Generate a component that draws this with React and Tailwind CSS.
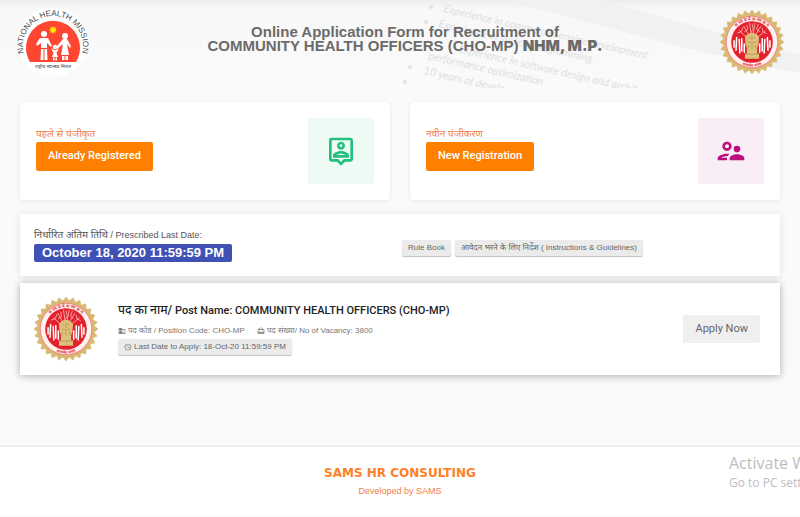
import { useId } from "react";
import { MdAccessTime, MdBusiness, MdCardTravel, MdOutlinePersonPin, MdOutlineSupervisorAccount } from "react-icons/md";

const TEETH = 28;
const rim = Array.from({ length: TEETH * 2 }, (_, i) => {
    const angle = (i / (TEETH * 2)) * Math.PI * 2;
    const r = i % 2 ? 44 : 50;
    return `${(50 + Math.cos(angle) * r).toFixed(1)},${(50 + Math.sin(angle) * r).toFixed(1)}`;
}).join(" ");

const branches = [
    "M50 50 L30 32", "M50 48 L37 25", "M50 46 L46 20", "M50 46 L55 20", "M50 48 L64 25", "M50 50 L71 32",
    "M36 27 l-3 7 l-6 2", "M42 23 l1 8 l-5 3", "M60 22 l-3 8 l5 4", "M66 28 l1 6 l6 3", "M50 21 l2 9 l-4 5",
];

function StateEmblem({ className }) {
    const id = useId();
    return (
        <svg viewBox="0 0 100 100" className={className} role="img" aria-label="मध्यप्रदेश शासन">
            <defs>
                <path id={`${id}-top`} d="M 16 50 A 34 34 0 0 1 84 50" />
                <path id={`${id}-low`} d="M 11.500 50 A 38.500 38.500 0 0 0 88.500 50" />
            </defs>
            <polygon points={rim} fill="#d9b871" stroke="#d9b871" strokeWidth="1" strokeLinejoin="round" />
            <circle cx="50" cy="50" r="41" fill="#f08a8a" />
            <circle cx="50" cy="50" r="39.500" fill="#fff1ee" />
            <circle cx="50" cy="50" r="32.500" fill="#e3202b" />
            <text fontSize="7" fontWeight="700" fill="#e3303a" className="font-['Noto_Sans',sans-serif]">
                <textPath href={`#${id}-top`} startOffset="50%" textAnchor="middle">म ध्य प्र दे श   शा स न</textPath>
            </text>
            <text fontSize="6" fontWeight="700" fill="#e3303a" className="font-['Noto_Sans',sans-serif]">
                <textPath href={`#${id}-low`} startOffset="50%" textAnchor="middle">सत्यमेव जयते</textPath>
            </text>
            <g fill="none" stroke="#ffc9c6" strokeWidth="1.200">
                {branches.map((d) => (
                    <path key={d} d={d} />
                ))}
            </g>
            <g fill="none" stroke="#fff" strokeWidth="2.400" strokeLinecap="round">
                <path d="M22 48 V58 M26 43 L25 63 M30 46 L31 67 M34 45 L34 64 M38 53 V66" />
                <path d="M78 48 V58 M74 43 L75 63 M70 46 L69 67 M66 45 L66 64 M62 53 V66" />
            </g>
            <g fill="#dcc07c">
                <path d="M43 38 q7 -5 14 0 l4 4 -1 12 -3 8 H43 l-3 -8 -1 -12z" />
                <path d="M42 60 H58 V68 H61 V76 H39 V68 H42z" />
            </g>
            <g fill="none" stroke="#a98843" strokeWidth="1">
                <path d="M45 43 h3 M52 43 h3 M50 40 v8 M43 49 q7 5 14 0 M44 54 v6 M50 54 v6 M56 54 v6 M40 69 h20" />
            </g>
        </svg>
    );
}

function MissionLogo({ className }) {
    const id = useId();
    return (
        <svg viewBox="0 0 74 74" className={className} role="img" aria-label="National Health Mission">
            <defs>
                <path id={id} d="M 9.800 50.500 A 30 30 0 1 1 64.200 50.500" />
            </defs>
            <circle cx="37" cy="34" r="35" fill="#fff" />
            <path d="M14 54 A27 27 0 1 1 60 54z" fill="#ff4632" />
            <text fontSize="8" fill="#4b4b4b" className="font-['Liberation_Sans',sans-serif]">
                <textPath href={`#${id}`} startOffset="50%" textAnchor="middle">NATIONAL HEALTH MISSION</textPath>
            </text>
            <circle cx="37" cy="22" r="2.800" fill="#ffe600" />
            <path d="M37 18.500 v7 M33.500 22 h7 M34.500 19.500 l5 5 M39.500 19.500 l-5 5" stroke="#ffe600" strokeWidth="1" />
            <g fill="#fff">
                <circle cx="28" cy="26" r="3" />
                <path d="M24 30 H32 L36 38 L35 39 L31 35 V40 H25 V35 L21 38 L20 36z" />
                <path d="M25 41 H27.500 V52 H24.500z M28.500 41 H31 L31.500 52 H28.500z" />
                <circle cx="49" cy="28" r="3" />
                <path d="M47 31 H51 L55 38 L54 40 L51 36 L53 47 H45 L47 36 L41 41 L40 39z" />
                <path d="M46 48 H48.500 V52 H46z M49.500 48 H52 V52 H49.500z" />
                <circle cx="39" cy="39" r="2.200" />
                <path d="M35 40 L38 42 H40 L43 40 L40.500 45 L42 49 H36 L37.500 45z M37 49.500 h1.500 v3 h-1.500z M39.500 49.500 h1.500 v3 h-1.500z" />
            </g>
            <text x="37" y="60" fontSize="5" textAnchor="middle" fill="#444" className="font-['Noto_Sans',sans-serif]">
                राष्ट्रीय स्वास्थ्य मिशन
            </text>
        </svg>
    );
}

function HeaderBackdrop() {
    return (
        <div aria-hidden="true" className="absolute inset-0 overflow-hidden bg-linear-to-b from-[#ededee] via-[#f8f8f8] via-10% to-[#fafafa]">
            <svg viewBox="0 0 800 88" className="h-full w-full" preserveAspectRatio="xMidYMid slice">
                <path d="M505 0 H600 L680 22 L800 55 V73 L680 47z" fill="#f1f1f3" />
                <g fontSize="11" fontStyle="italic" fill="#dfdfe1" className="font-['Lato',sans-serif]">
                    <text transform="translate(443 12) rotate(13)">Experience in commercial engine development</text>
                    <text transform="translate(438 27) rotate(13)">Experience in system programming</text>
                    <text transform="translate(458 52) rotate(13)">Experience in software design and architecture</text>
                    <text transform="translate(428 59) rotate(13)">performance optimization</text>
                    <text transform="translate(423 74) rotate(13)">10 years of development</text>
                </g>
                <g fill="#e2e2e3">
                    <circle cx="431" cy="7" r="2" />
                    <circle cx="426" cy="22" r="2" />
                    <circle cx="410" cy="67" r="2" />
                    <circle cx="405" cy="82" r="2" />
                </g>
            </svg>
        </div>
    );
}

function RegisterCard({ label, action, icon, tint }) {
    return (
        <section className="flex flex-1 items-center justify-between rounded-sm bg-white p-4 shadow-[0_1px_4px_rgba(0,0,0,0.08)]">
            <div className="pb-1.5">
                <p className="text-[10px] leading-4 text-[#f08048]">{label}</p>
                <button type="button" className="h-[29px] rounded-xs bg-[#ff8000] px-3 text-[11px] font-medium text-white font-['Roboto','Noto_Sans',sans-serif]">
                    {action}
                </button>
            </div>
            <div className={`flex size-[66px] items-center justify-center rounded-xs ${tint}`}>{icon}</div>
        </section>
    );
}

const chip = "rounded-xs bg-[#ebebeb] px-1.5 text-[8px] leading-4 text-[#666] shadow-[0_1px_1px_rgba(0,0,0,0.25)]";

export default function App() {
    return (
        <div className="relative flex min-h-screen flex-col overflow-hidden bg-[#fafafa] font-['Liberation_Sans','Noto_Sans',sans-serif]">
            <header className="relative h-22">
                <HeaderBackdrop />
                <div className="relative flex items-center justify-between px-4 pt-2">
                    <MissionLogo className="size-[74px]" />
                    <h1 className="pb-3 text-center text-[15px] leading-[14px] font-bold text-[#6b6b6b]">
                        Online Application Form for Recruitment of
                        <br />
                        COMMUNITY HEALTH OFFICERS (CHO-MP) <span className="font-black font-['Inter',sans-serif]">NHM, M.P.</span>
                    </h1>
                    <StateEmblem className="mb-1.5 size-16" />
                </div>
            </header>

            <main className="grow px-5 pt-3.5">
                <div className="flex gap-5">
                    <RegisterCard
                        label="पहले से पंजीकृत"
                        action="Already Registered"
                        tint="bg-[#eefaf4]"
                        icon={<MdOutlinePersonPin className="size-8 text-[#23bf7c]" />}
                    />
                    <RegisterCard
                        label="नवीन पंजीकरण"
                        action="New Registration"
                        tint="bg-[#f9edf6]"
                        icon={<MdOutlineSupervisorAccount className="size-8 text-[#b9127f]" />}
                    />
                </div>

                <section className="mt-3.5 flex items-center rounded-xs bg-white px-3.5 pt-3 pb-3.5 shadow-[0_1px_8px_rgba(0,0,0,0.1)]">
                    <div className="w-1/2">
                        <p className="text-[9px] leading-[18px] text-[#555]">
                            <span className="text-[10px]">निर्धारित अंतिम तिथि</span> / Prescribed Last Date:
                        </p>
                        <p className="w-fit rounded-xs bg-[#3f51b5] px-2 text-[13px] leading-[18px] font-bold text-white">October 18, 2020 11:59:59 PM</p>
                    </div>
                    <div className="flex items-center gap-1 pt-2 pl-0.5">
                        <button type="button" className={chip}>Rule Book</button>
                        <button type="button" className={chip}>आवेदन भरने के लिए निर्देश ( Instructions &amp; Guidelines)</button>
                    </div>
                </section>

                <section className="mt-[7px] flex items-center bg-white p-3.5 shadow-[0_1px_8px_rgba(0,0,0,0.3)]">
                    <StateEmblem className="size-16" />
                    <div className="ml-5 grow pb-1.5">
                        <h2 className="text-[11px] leading-6 font-medium text-[#222] font-['Roboto','Noto_Sans',sans-serif]">
                            <span className="text-[12px]">पद का नाम/</span> Post Name: COMMUNITY HEALTH OFFICERS (CHO-MP)
                        </h2>
                        <p className="flex gap-3 text-[8px] leading-4 text-[#777]">
                            <span className="flex items-center gap-0.5"><MdBusiness /> पद कोड / Position Code: CHO-MP</span>
                            <span className="flex items-center gap-0.5"><MdCardTravel /> पद संख्या/ No of Vacancy: 3800</span>
                        </p>
                        <p className={`flex w-fit items-center gap-0.5 ${chip}`}><MdAccessTime /> Last Date to Apply: 18-Oct-20 11:59:59 PM</p>
                    </div>
                    <button type="button" className="mr-1.5 h-7 rounded-xs bg-[#efefef] px-3 text-[11px] text-[#666] font-['Roboto',sans-serif]">Apply Now</button>
                </section>
            </main>

            <footer className="mb-px h-[71px] border-t-2 border-[#efefef] bg-white pt-4 text-center">
                <p className="text-[12px] leading-5 font-bold text-[#ff7f27] font-['DejaVu_Sans',sans-serif]">SAMS HR CONSULTING</p>
                <p className="text-[9px] leading-4 text-[#f08048]">Developed by SAMS</p>
            </footer>

            <div className="absolute bottom-6 left-[729px] whitespace-nowrap text-[#bdbdbd] font-['Open_Sans',sans-serif]">
                <p className="text-base leading-5">Activate Windows</p>
                <p className="text-[12px] leading-5">Go to PC settings to activate Windows.</p>
            </div>
        </div>
    );
}
